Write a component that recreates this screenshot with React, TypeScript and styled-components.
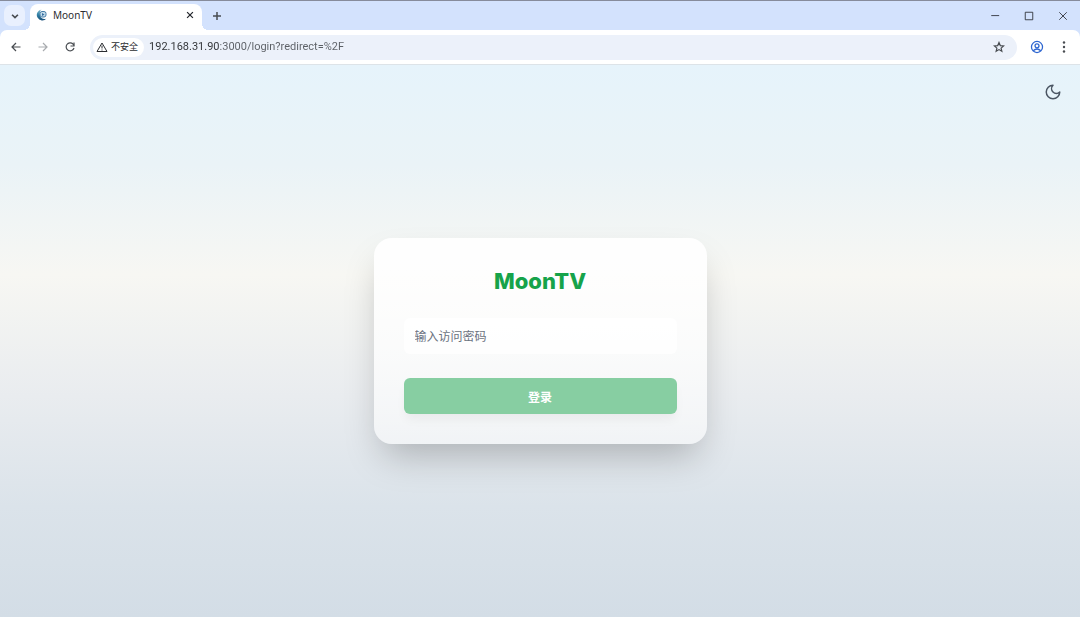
import React, { useState } from 'react';
import styled, { createGlobalStyle } from 'styled-components';

const uiFont = 'Roboto, "Noto Sans CJK SC", sans-serif';
const tabFont = '"Noto Sans", "Noto Sans CJK SC", sans-serif';
const brandFont = 'Inter, "Noto Sans CJK SC", sans-serif';

const GlobalStyle = createGlobalStyle`
  *, *::before, *::after { box-sizing: border-box; }
  body { margin: 0; font-family: ${uiFont}; }
  button, input { font: inherit; }
`;

const Window = styled.div`
  display: flex;
  flex-direction: column;
  min-height: 100vh;
  background: #d3e2fd;
`;

const TabStrip = styled.header`
  display: flex;
  align-items: flex-end;
  height: 30px;
  border-top: 1px solid #868b9b;
`;

const IconButton = styled.button<{ $size?: number; $color?: string }>`
  display: flex;
  flex: none;
  align-items: center;
  justify-content: center;
  width: ${({ $size = 20 }) => $size}px;
  height: ${({ $size = 20 }) => $size}px;
  padding: 0;
  border: 0;
  border-radius: 50%;
  background: transparent;
  color: ${({ $color = '#484c51' }) => $color};
`;

const TabSearch = styled(IconButton)`
  align-self: center;
  margin: 0 5px 0 4px;
  border-radius: 7px;
  background: #e9f0fe;
`;

const Tab = styled.div`
  position: relative;
  display: flex;
  align-items: center;
  width: 172px;
  height: 26px;
  padding: 0 4px 4px 6px;
  border-radius: 8px 8px 0 0;
  background: #fff;

  &::before, &::after {
    content: '';
    position: absolute;
    bottom: 0;
    width: 6px;
    height: 6px;
  }
  &::before {
    left: -6px;
    background: radial-gradient(circle at 0 0, transparent 6px, #fff 6px);
  }
  &::after {
    right: -6px;
    background: radial-gradient(circle at 100% 0, transparent 6px, #fff 6px);
  }
`;

const TabTitle = styled.span`
  flex: 1;
  margin-left: 5px;
  color: #2b2d31;
  font-family: ${tabFont};
  font-size: 10px;
  line-height: 14px;
`;

const NewTab = styled(IconButton)`
  align-self: center;
  margin-left: 5px;
`;

const WindowControls = styled.div`
  display: flex;
  align-self: center;
  margin-left: auto;
`;

const WindowControl = styled.button`
  display: flex;
  align-items: center;
  justify-content: center;
  width: 34px;
  height: 28px;
  padding: 0;
  border: 0;
  background: transparent;
  color: #25282e;
`;

const Toolbar = styled.div`
  display: flex;
  align-items: center;
  height: 35px;
  padding: 0 6px;
  border-bottom: 1px solid #dde3e8;
  border-radius: 7px 7px 0 0;
  background: #fff;
`;

const NavButtons = styled.nav`
  display: flex;
  gap: 7px;
  margin-right: 10px;
`;

const AddressBar = styled.div`
  display: flex;
  flex: 1;
  align-items: center;
  height: 25px;
  padding: 0 8px 0 3px;
  border-radius: 13px;
  background: #ecf1fa;
`;

const SecurityChip = styled.button`
  display: flex;
  flex: none;
  align-items: center;
  gap: 3px;
  height: 19px;
  padding: 0 6px 0 3px;
  border: 0;
  border-radius: 10px;
  background: #fff;
  color: #2b2d31;
  font-size: 9px;
  line-height: 14px;
`;

const UrlField = styled.input`
  flex: 1;
  min-width: 0;
  margin-left: 5px;
  padding: 0;
  border: 0;
  outline: 0;
  background: linear-gradient(90deg, #303236 71px, #5b5f65 71px);
  background-clip: text;
  -webkit-background-clip: text;
  -webkit-text-fill-color: transparent;
  color: #303236;
  font-size: 11px;
  line-height: 18px;
`;

const ToolbarActions = styled.div`
  display: flex;
  gap: 7px;
  margin-left: 10px;
`;

const Page = styled.main`
  position: relative;
  display: flex;
  flex: 1;
  align-items: center;
  justify-content: center;
  padding: 24px 12px;
  background: linear-gradient(
    180deg,
    #e6f3fb 0%,
    #eaf3f7 18%,
    #f7f7f3 38%,
    #e9ecef 60%,
    #dbe3ea 80%,
    #d3dde6 100%
  );
`;

const ThemeToggle = styled(IconButton)`
  position: absolute;
  top: 12px;
  right: 12px;
`;

const LoginCard = styled.form`
  display: flex;
  flex-direction: column;
  gap: 24px;
  width: 100%;
  max-width: 333px;
  padding: 30px;
  border-radius: 18px;
  background: linear-gradient(
    180deg,
    rgba(255, 255, 255, 0.95),
    rgba(255, 255, 255, 0.75) 50%,
    rgba(255, 255, 255, 0.5)
  );
  box-shadow: 0 19px 37px -9px rgba(0, 0, 0, 0.25);
`;

const Brand = styled.h1`
  margin: 0;
  color: #16a34a;
  font-family: ${brandFont};
  font-size: 22px;
  font-weight: 800;
  line-height: 26px;
  text-align: center;
`;

const PasswordField = styled.input`
  width: 100%;
  height: 36px;
  padding: 0 11px;
  border: 0;
  border-radius: 6px;
  outline: 0;
  background: rgba(255, 255, 255, 0.8);
  color: #111827;
  font-family: ${brandFont};
  font-size: 12px;

  &::placeholder { color: #6b7280; opacity: 1; }
`;

const SubmitButton = styled.button`
  width: 100%;
  height: 36px;
  border: 0;
  border-radius: 6px;
  background: #87cea2;
  box-shadow: 0 7px 11px -2px rgba(0, 0, 0, 0.05);
  color: #fff;
  font-family: ${brandFont};
  font-size: 12px;
  font-weight: 600;
`;

const Icon = ({ size, width = 2, children }: { size: number; width?: number; children: React.ReactNode }) => (
  <svg
    width={size}
    height={size}
    viewBox="0 0 24 24"
    fill="none"
    stroke="currentColor"
    strokeWidth={width}
    aria-hidden="true"
  >
    {children}
  </svg>
);

const Favicon = () => (
  <svg width="12" height="12" viewBox="0 0 24 24" aria-hidden="true">
    <defs>
      <linearGradient id="moon" x1="0" y1="0" x2="0" y2="1">
        <stop offset="0" stopColor="#7db9cf" />
        <stop offset="0.5" stopColor="#2f7fa4" />
        <stop offset="1" stopColor="#174e78" />
      </linearGradient>
    </defs>
    <path d="M11 1A11 11 0 1 0 21 19c-5 3-12 0-13-6C7 7 8 3 11 1z" fill="url(#moon)" />
    <rect x="8" y="5" width="12" height="11" rx="4" fill="#c3dcea" stroke="#477da8" strokeWidth="2" />
    <path d="M12 8l5 3-5 3z" fill="#356da0" />
  </svg>
);

export default function App() {
  const [password, setPassword] = useState('');

  return (
    <>
      <GlobalStyle />
      <Window>
        <TabStrip>
          <TabSearch $size={21} aria-label="搜索标签页">
            <Icon size={10} width={4}><path d="M5 9l7 7 7-7" /></Icon>
          </TabSearch>
          <Tab>
            <Favicon />
            <TabTitle>MoonTV</TabTitle>
            <IconButton $size={16} $color="#25282e" aria-label="关闭标签页">
              <Icon size={10} width={3}><path d="M5 5l14 14M19 5L5 19" /></Icon>
            </IconButton>
          </Tab>
          <NewTab aria-label="新建标签页">
            <Icon size={12} width={3}><path d="M4 12h16M12 4v16" /></Icon>
          </NewTab>
          <WindowControls>
            <WindowControl aria-label="最小化">
              <Icon size={10} width={2}><path d="M3 11h19" /></Icon>
            </WindowControl>
            <WindowControl aria-label="最大化">
              <Icon size={10} width={2}><path d="M3 3h18v18H3z" /></Icon>
            </WindowControl>
            <WindowControl aria-label="关闭">
              <Icon size={10} width={2}><path d="M3 3l18 18M21 3L3 21" /></Icon>
            </WindowControl>
          </WindowControls>
        </TabStrip>

        <Toolbar>
          <NavButtons>
            <IconButton aria-label="后退">
              <Icon size={12} width={2.4}><path d="M21 12H4M12 4l-8 8 8 8" /></Icon>
            </IconButton>
            <IconButton $color="#a8abaf" aria-label="前进">
              <Icon size={12} width={2.4}><path d="M3 12h17M12 4l8 8-8 8" /></Icon>
            </IconButton>
            <IconButton aria-label="重新加载">
              <Icon size={12} width={2.4}>
                <path d="M20 14a8 8 0 1 1-2-8l2 3" />
                <path d="M20 3v7h-7" />
              </Icon>
            </IconButton>
          </NavButtons>
          <AddressBar>
            <SecurityChip>
              <Icon size={12} width={2}>
                <path d="M12 4L2 21h20z" />
                <path d="M12 9v6M12 17v2" />
              </Icon>
              不安全
            </SecurityChip>
            <UrlField aria-label="地址" defaultValue="192.168.31.90:3000/login?redirect=%2F" />
            <IconButton aria-label="添加书签">
              <Icon size={12} width={2.4}>
                <path d="M12 3l2.6 6.2 6.6.6-5 4.4 1.5 6.5-5.7-3.5-5.7 3.5 1.5-6.5-5-4.4 6.6-.6z" />
              </Icon>
            </IconButton>
          </AddressBar>
          <ToolbarActions>
            <IconButton $color="#2e66d0" aria-label="用户">
              <Icon size={14} width={2.2}>
                <circle cx="12" cy="12" r="9.5" />
                <circle cx="12" cy="10" r="3.4" />
                <path d="M5.5 18.5c4-4 9-4 13 0" />
              </Icon>
            </IconButton>
            <IconButton aria-label="菜单">
              <svg width="12" height="12" viewBox="0 0 24 24" fill="currentColor" aria-hidden="true">
                <circle cx="12" cy="3" r="2.4" />
                <circle cx="12" cy="12" r="2.4" />
                <circle cx="12" cy="21" r="2.4" />
              </svg>
            </IconButton>
          </ToolbarActions>
        </Toolbar>

        <Page>
          <ThemeToggle $size={30} $color="#4b5563" aria-label="切换主题">
            <Icon size={18} width={2}>
              <path
                d="M12 3a6 6 0 0 0 9 9 9 9 0 1 1-9-9Z"
                strokeLinecap="round"
                strokeLinejoin="round"
              />
            </Icon>
          </ThemeToggle>
          <LoginCard onSubmit={(event) => event.preventDefault()}>
            <Brand>MoonTV</Brand>
            <PasswordField
              type="password"
              aria-label="输入访问密码"
              placeholder="输入访问密码"
              value={password}
              onChange={(event) => setPassword(event.target.value)}
            />
            <SubmitButton type="submit">登录</SubmitButton>
          </LoginCard>
        </Page>
      </Window>
    </>
  );
}
